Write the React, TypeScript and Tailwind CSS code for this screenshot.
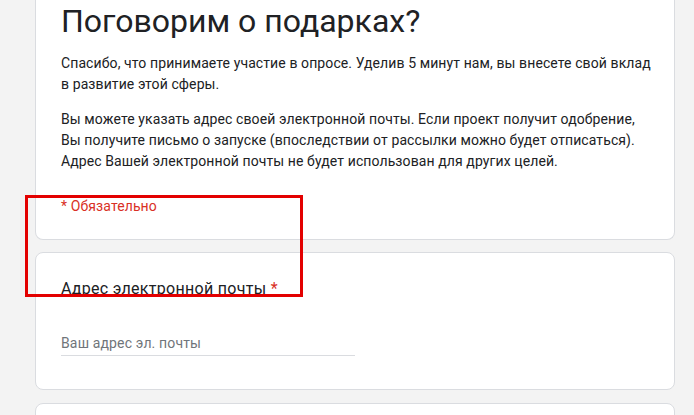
export default function App() {
  return (
    <div
      className="relative h-[415px] w-[694px] overflow-hidden bg-[#f3f3f3] text-[#202124]"
      style={{ fontFamily: "Roboto, 'Noto Sans', sans-serif" }}
    >
      <div className="ml-[35px] flex w-[640px] flex-col gap-[12px]">
        {/* Header card, scrolled so its top edge is off screen */}
        <div className="rounded-b-lg border border-t-0 border-[#dadce0] bg-white pb-[23px] pl-[25px] pr-[16px] pt-px">
          <h1 className="text-[32px] font-normal leading-[40px]">Поговорим о подарках?</h1>
          <p className="mt-[12px] text-[14px] leading-[21px] tracking-[0.1px]">
            Спасибо, что принимаете участие в опросе. Уделив 5 минут нам, вы внесете свой вклад
            <br />в развитие этой сферы.
          </p>
          <p className="mt-[14px] text-[14px] leading-[21px] tracking-[0.1px]">
            Вы можете указать адрес своей электронной почты. Если проект получит одобрение,
            <br />
            Вы получите письмо о запуске (впоследствии от рассылки можно будет отписаться).
            <br />
            Адрес Вашей электронной почты не будет использован для других целей.
          </p>
          <p className="mt-[24px] text-[14px] leading-[20px] tracking-[0.1px] text-[#d93025]">* Обязательно</p>
        </div>

        <div className="rounded-lg border border-[#dadce0] bg-white pb-[33px] pl-[25px] pt-[24px]">
          <div className="text-[16px] leading-[24px] tracking-[0.3px]">
            Адрес электронной почты <span className="text-[#d93025]">*</span>
          </div>
          <div className="mt-[32px] w-[294px] border-b border-[#dadce0] pb-[2px] text-[14px] leading-[20px] tracking-[0.15px] text-[#70757a]">
            Ваш адрес эл. почты
          </div>
        </div>

        <div className="mt-px h-[60px] rounded-lg border border-[#dadce0] bg-white" />
      </div>

      {/* Red annotation frame */}
      <div className="pointer-events-none absolute left-[25px] top-[195px] h-[102px] w-[278px] border-[3px] border-[#e30000]" />
    </div>
  );
}
